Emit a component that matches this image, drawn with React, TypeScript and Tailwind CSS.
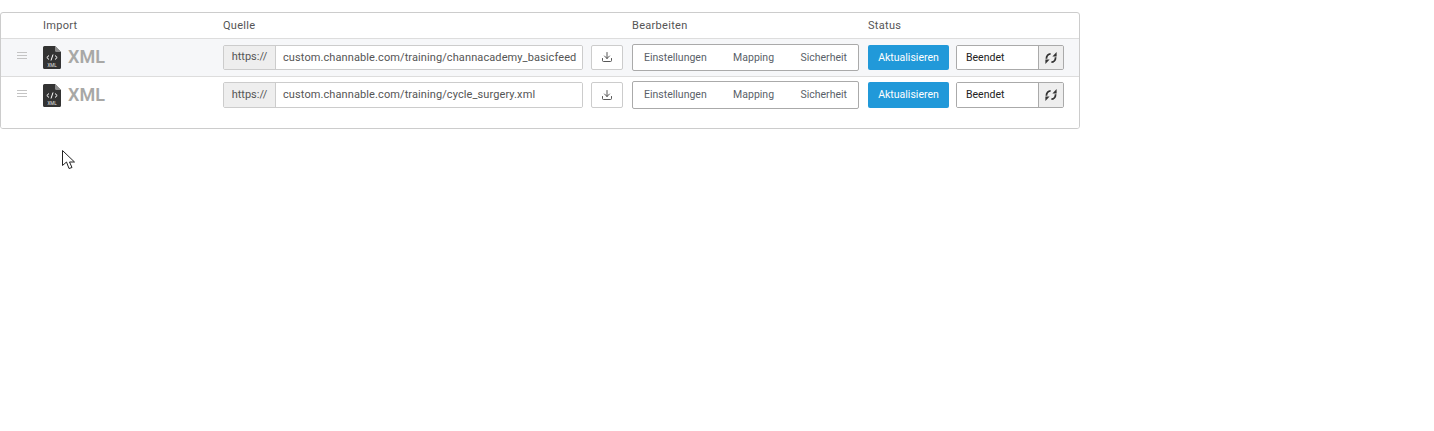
import React from 'react';
import { Download } from 'lucide-react';

const rows = [
  { url: 'custom.channable.com/training/channacademy_basicfeed', first: true },
  { url: 'custom.channable.com/training/cycle_surgery.xml', first: false },
];

function XmlIcon() {
  return (
    <svg width="18" height="23" viewBox="0 0 18 23" className="shrink-0">
      <path d="M1.5 0H12L18 6V21.5a1.5 1.5 0 0 1-1.5 1.5H1.5A1.5 1.5 0 0 1 0 21.5V1.5A1.5 1.5 0 0 1 1.5 0Z" fill="#333333" />
      <path d="M12 0V4.5A1.5 1.5 0 0 0 13.5 6H18Z" fill="#8c8c8c" />
      <path d="M6 9.5L3.8 11.5L6 13.5M12 9.5L14.2 11.5L12 13.5M10 8.5L8 14.5" stroke="#ffffff" strokeWidth="1" fill="none" />
      <text x="9" y="20.5" textAnchor="middle" fill="#e5e5e5" fontSize="4.5" fontFamily="Roboto, sans-serif">XML</text>
    </svg>
  );
}

function SyncIcon() {
  return (
    <svg width="12" height="12" viewBox="0 0 12 12" fill="none" stroke="#333333" strokeWidth="1.8">
      <path d="M1.4 6.8C1.4 3.6 3.5 1.8 5.6 1.8" />
      <path d="M10.6 5.2C10.6 8.4 8.5 10.2 6.4 10.2" />
      <path d="M0.4 12V7.6H4.6Z" fill="#333333" stroke="none" />
      <path d="M11.6 0V4.4H7.4Z" fill="#333333" stroke="none" />
    </svg>
  );
}

function ImportRow({ url, first }: { url: string; first: boolean }) {
  return (
    <div className={`flex items-start pl-[15px] pt-[5px] ${first ? 'h-[38px] bg-[#f6f7f9] border-b border-[#dddddd]' : 'h-[51px] bg-white'}`}>
      <div className="w-[27px] pt-[8px] pl-[1px] flex flex-col gap-[2px]">
        <span className="block w-[10px] h-[1px] bg-[#c4c4c4]" />
        <span className="block w-[10px] h-[1px] bg-[#c4c4c4]" />
        <span className="block w-[10px] h-[1px] bg-[#c4c4c4]" />
      </div>
      <div className="w-[180px] flex items-center gap-[7px] pt-[1px]">
        <XmlIcon />
        <span className="text-[18px] leading-[24px] font-semibold text-[#a8a8a6]">XML</span>
      </div>
      <div className={`w-[360px] flex border border-[#cccccc] rounded-[2px] text-[11px] overflow-hidden ${first ? 'h-[25px] mt-[1px]' : 'h-[26px]'}`}>
        <span className="w-[52px] shrink-0 bg-[#eeeeee] border-r border-[#cccccc] text-[#555555] flex items-center justify-center">https://</span>
        <span className={`flex-1 bg-white text-[#555555] tracking-[0.1px] pl-[7px] flex items-center whitespace-nowrap ${first ? 'pt-[1px]' : ''}`}>{url}</span>
      </div>
      <button className={`ml-[8px] w-[32px] bg-white border border-[#cccccc] rounded-[2px] flex items-center justify-center text-[#444444] ${first ? 'h-[25px] mt-[1px]' : 'h-[26px]'}`}>
        <Download size={12} strokeWidth={1.8} className="-mt-[1px]" />
      </button>
      <div className={`ml-[9px] w-[227px] bg-white border border-[#aaaaaa] rounded-[2px] flex items-center justify-between pl-[11px] pr-[11px] text-[10.5px] text-[#5a5f69] ${first ? 'h-[27px]' : 'h-[28px] -mt-[1px]'}`}>
        <span>Einstellungen</span>
        <span>Mapping</span>
        <span>Sicherheit</span>
      </div>
      <button className={`ml-[9px] w-[81px] bg-[#2199d9] text-white text-[10.5px] rounded-[2px] flex items-center justify-center ${first ? 'h-[25px] mt-[1px]' : 'h-[26px]'}`}>
        Aktualisieren
      </button>
      <div className={`ml-[7px] w-[108px] flex border border-[#aaaaaa] rounded-[2px] overflow-hidden text-[10.5px] text-[#222222] ${first ? 'h-[25px] mt-[1px]' : 'h-[26px]'}`}>
        <span className="flex-1 bg-white pl-[9px] flex items-center">Beendet</span>
        <span className="w-[25px] bg-[#eeeeee] border-l border-[#aaaaaa] flex items-center justify-center">
          <SyncIcon />
        </span>
      </div>
    </div>
  );
}

export default function App() {
  return (
    <div className="relative w-[1434px] h-[431px] bg-white pt-[12px] font-['Roboto',sans-serif]">
      <div className="w-[1080px] border border-[#cccccc] rounded-[3px] overflow-hidden">
        <div className="flex items-center h-[26px] pt-[1px] pl-[42px] border-b border-[#dddddd] text-[11px] text-[#555555] tracking-[0.3px]">
          <span className="w-[180px]">Import</span>
          <span className="w-[409px]">Quelle</span>
          <span className="w-[236px]">Bearbeiten</span>
          <span>Status</span>
        </div>
        {rows.map(row => (
          <ImportRow key={row.url} url={row.url} first={row.first} />
        ))}
      </div>
      {/* mouse pointer from the recording */}
      <svg className="absolute left-[62px] top-[150px]" width="14" height="20" viewBox="0 0 14 20">
        <path d="M0.5 0.5V15.5L4.5 12L7 18.5L10 17.5L7.5 12H12.5Z" fill="#ffffff" stroke="#222222" strokeWidth="1" />
      </svg>
    </div>
  );
}
